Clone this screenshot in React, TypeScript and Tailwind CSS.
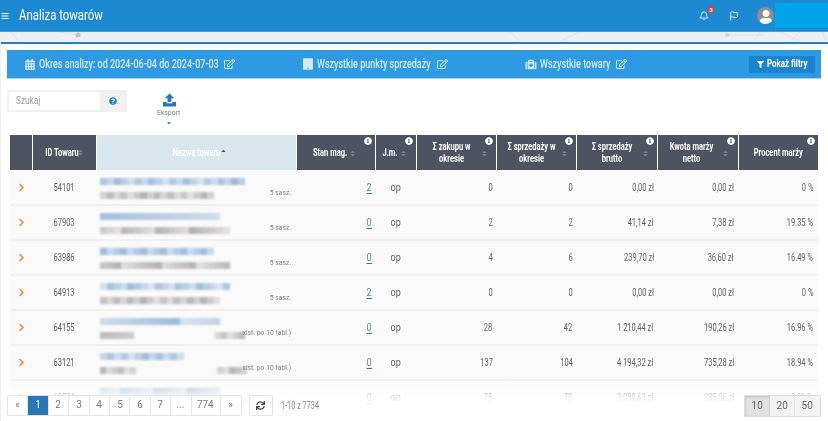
import { Bell, Flag } from "lucide-react";
import {
  FaBars,
  FaCalendarAlt,
  FaChevronRight,
  FaRegEdit,
  FaFilter,
  FaInfoCircle,
  FaMedkit,
  FaQuestionCircle,
  FaSort,
  FaSortUp,
  FaSync,
  FaTablet,
  FaUser,
  FaCaretDown,
} from "react-icons/fa";

type Row = {
  id: string;
  stock: string;
  buy: string;
  sell: string;
  gross: string;
  margin: string;
  pct: string;
  unit: string;
  top: number;
  bottom: number;
  gap?: boolean;
};

const rows: Row[] = [
  { id: "54101", stock: "2", buy: "0", sell: "0", gross: "0,00 zł", margin: "0,00 zł", pct: "0 %", unit: "5 sasz.", top: 145, bottom: 114 },
  { id: "67903", stock: "0", buy: "2", sell: "2", gross: "41,14 zł", margin: "7,38 zł", pct: "19.35 %", unit: "5 sasz.", top: 120, bottom: 130 },
  { id: "63986", stock: "0", buy: "4", sell: "6", gross: "239,70 zł", margin: "36,60 zł", pct: "16.49 %", unit: "5 sasz.", top: 114, bottom: 130 },
  { id: "64913", stock: "2", buy: "0", sell: "0", gross: "0,00 zł", margin: "0,00 zł", pct: "0 %", unit: "5 sasz.", top: 130, bottom: 120 },
  { id: "64155", stock: "0", buy: "28", sell: "42", gross: "1 210,44 zł", margin: "190,26 zł", pct: "16.96 %", unit: "xist. po 10 tabl.)", top: 120, bottom: 34, gap: true },
  { id: "63121", stock: "0", buy: "137", sell: "104", gross: "4 194,32 zł", margin: "735,28 zł", pct: "18.94 %", unit: "xist. po 10 tabl.)", top: 84, bottom: 36, gap: true },
  { id: "65574", stock: "0", buy: "75", sell: "73", gross: "3 088,63 zł", margin: "235,06 zł", pct: "8,01 %", unit: "xist. po 10 tabl.)", top: 120, bottom: 34, gap: true },
];

const headers = [
  { lines: ["Stan mag."], w: "w-[79px]", pad: "pr-[12px]", sort: "right-[20px]" },
  { lines: ["J.m."], w: "w-[41px]", pad: "pr-[12px]", sort: "right-[10px]" },
  { lines: ["Σ zakupu w", "okresie"], w: "w-[80px]", pad: "pr-[10px]", sort: "right-[9px]" },
  { lines: ["Σ sprzedaży w", "okresie"], w: "w-[80px]", pad: "pr-[10px]", sort: "right-[9px]" },
  { lines: ["Σ sprzedaży", "brutto"], w: "w-[81px]", pad: "pr-[10px]", sort: "right-[9px]" },
  { lines: ["Kwota marży", "netto"], w: "w-[81px]", pad: "pr-[13px]", sort: "right-[10px]" },
  { lines: ["Procent marży"], w: "w-[79px]", pad: "", sort: "" },
];

// paski udające rozmazaną nazwę towaru
function Smear({ width, blue, seed }: { width: number; blue: boolean; seed: number }) {
  const cells = Array.from({ length: Math.ceil(width / 7) }, (_, i) => {
    const v = ((i + 3) * (seed + 7) * 37) % 100;
    const a = 0.25 + (v / 100) * 0.45;
    return blue ? `rgba(118,160,205,${a})` : `rgba(150,145,145,${a})`;
  });
  return (
    <div className="flex h-[7px] blur-[1px]" style={{ width }}>
      {cells.map((c, i) => (
        <div key={i} className="h-full flex-1" style={{ background: c }} />
      ))}
    </div>
  );
}

function Pager({ children, active, w = "w-[20.4px]" }: { children: React.ReactNode; active?: boolean; w?: string }) {
  return (
    <div
      className={`flex h-full items-center justify-center border-r border-[#e3e3e3] text-[11px] last:border-r-0 ${w} ${
        active ? "bg-[#2a76b4] text-white" : "text-[#777]"
      }`}
    >
      <span className="scale-x-90">{children}</span>
    </div>
  );
}

function Val({ children }: { children: React.ReactNode }) {
  return <span className="inline-block origin-right scale-x-75 whitespace-nowrap">{children}</span>;
}

export default function App() {
  return (
    <div className="relative flex h-[421px] w-[828px] flex-col overflow-hidden bg-[#ecf0f3] font-['Roboto',sans-serif]">
      <header className="flex h-[32px] shrink-0 items-center border-b border-[#3b9fe0] bg-[#1c89d2] pl-[1px] text-white">
        <FaBars className="h-[8px] w-[8px]" />
        <span className="ml-[10px] origin-left scale-x-[0.76] whitespace-nowrap text-[15px]">Analiza towarów</span>
        <div className="ml-auto flex h-full items-center">
          <div className="relative mr-[20px]">
            <Bell className="h-[10px] w-[10px]" strokeWidth={2} />
            <span className="absolute -right-[5px] -top-[5px] flex h-[7px] w-[6px] items-center justify-center rounded-[1px] bg-[#d9413a] text-[6px] font-bold">3</span>
          </div>
          <Flag className="mr-[18px] h-[10px] w-[10px]" strokeWidth={2} />
          <div className="flex h-[17px] w-[17px] items-end justify-center overflow-hidden rounded-full bg-[#8a8f94]">
            <FaUser className="h-[14px] w-[14px] text-white" />
          </div>
          <div className="ml-[1px] h-[25px] w-[53px] bg-[#02a3e8]" />
        </div>
      </header>

      <div className="h-[9px] shrink-0 overflow-hidden">
        <svg viewBox="0 0 828 9" className="h-full w-full">
          <g stroke="#d5dadd" strokeWidth="0.6" fill="none">
            <path d="M12 0 L18 9 M60 0 L78 3 L74 9 M510 0 L520 9 M560 9 L580 0 M726 3 L764 3 M755 9 L760 0 M780 0 L800 9 M800 0 L790 9 M822 0 L826 9" />
          </g>
          <circle cx="78" cy="3" r="2.5" fill="#bfc4c8" />
          <circle cx="727" cy="3" r="2" fill="#d0d5d8" />
        </svg>
      </div>

      <main className="ml-[1px] flex min-h-0 flex-1 flex-col bg-white pt-[1px]">
        <div className="h-[2px] shrink-0 bg-[#1c7fd0]" />
        <div className="ml-[6px] mr-[7px] mt-[6px] flex h-[29px] shrink-0 items-center border-b border-[#a8d4f2] bg-[#2d9ae3] text-[12px] font-medium text-[#d4e9f8]">
          <FaCalendarAlt className="ml-[18px] h-[11px] w-[10px]" />
          <span className="ml-[4px] w-[185px] origin-left scale-x-75 whitespace-nowrap">Okres analizy: od 2024-06-04 do 2024-07-03</span>
          <FaRegEdit className="h-[10px] w-[11px]" />
          <FaTablet className="ml-[68px] h-[12px] w-[10px]" />
          <span className="ml-[4px] w-[120px] origin-left scale-x-75 whitespace-nowrap">Wszystkie punkty sprzedaży</span>
          <FaRegEdit className="h-[10px] w-[11px]" />
          <FaMedkit className="ml-[77px] h-[11px] w-[12px]" />
          <span className="ml-[3px] w-[76px] origin-left scale-x-75 whitespace-nowrap">Wszystkie towary</span>
          <FaRegEdit className="h-[10px] w-[11px]" />
          <button className="ml-auto mr-[6px] flex h-[17px] w-[66px] items-center bg-[#1c84cf] pl-[8px] text-[11px] font-bold text-white">
            <FaFilter className="mr-[3px] h-[7px] w-[7px] shrink-0" />
            <span className="w-[40px] origin-left scale-x-[0.72] whitespace-nowrap">Pokaż filtry</span>
          </button>
        </div>

        <div className="ml-[6px] mt-[11px] flex shrink-0 items-start">
          <div className="flex h-[22px] w-[120px] border-2 border-[#f1f1f1]">
            <div className="flex flex-1 items-center pl-[7px] text-[11px] text-[#9a9a9a]">
              <span className="origin-left scale-x-75">Szukaj</span>
            </div>
            <div className="flex w-[25px] items-center justify-center bg-[#f1f1f1]">
              <FaQuestionCircle className="h-[8px] w-[8px] text-[#1c84d0]" />
            </div>
          </div>
          <div className="ml-[27px] mt-[3px] flex w-[30px] flex-col items-center text-[#2a76b4]">
            <svg viewBox="0 0 16 14" className="h-[14px] w-[15px]" fill="currentColor">
              <path d="M8 0 L13 5 H10 V9 H6 V5 H3 Z" />
              <path d="M1 9 H5 V10.5 H11 V9 H15 V14 H1 Z" />
            </svg>
            <span className="scale-x-[0.85] text-[8px] leading-[12px] text-[#6d7f90]">Eksport</span>
            <FaCaretDown className="mt-[1px] h-[6px] w-[6px] text-[#4a6f92]" />
          </div>
        </div>

        <div className="ml-[9px] mt-[9px] w-[808px] shrink-0">
          <table className="w-full table-fixed border-collapse text-[#5f5f5f]">
            <thead>
              <tr className="h-[35px] text-[10px] font-bold leading-[12px] text-white">
                <th className="w-[22px] border-r border-white bg-[#4d5361]" />
                <th className="relative w-[64px] border-r border-white bg-[#4d5361]">
                  <div className="scale-x-75 whitespace-nowrap pr-[7px]">ID Towaru</div>
                  <FaSort className="absolute right-[13px] top-[14px] h-[7px] w-[5px] text-[#7c818c]" />
                </th>
                <th className="relative w-[200px] border-r border-white bg-[#dbe7ef]">
                  <div className="scale-x-75 whitespace-nowrap">Nazwa towaru</div>
                  <FaSortUp className="absolute right-[70px] top-[14px] h-[7px] w-[5px] text-[#4d5361]" />
                </th>
                {headers.map((h) => (
                  <th key={h.lines[0]} className={`relative border-r border-white bg-[#4d5361] last:border-r-0 ${h.w}`}>
                    <div className={h.pad}>
                      {h.lines.map((l) => (
                        <div key={l} className="scale-x-75 whitespace-nowrap">{l}</div>
                      ))}
                    </div>
                    {h.sort && <FaSort className={`absolute top-[15px] h-[7px] w-[5px] text-[#7c818c] ${h.sort}`} />}
                    <FaInfoCircle className="absolute right-[3px] top-[2px] h-[8px] w-[8px] text-white" />
                  </th>
                ))}
              </tr>
            </thead>
            <tbody className="text-[10px]">
              {rows.map((r, i) => (
                <tr key={r.id} className="h-[35px] border-b-2 border-[#f1f1f1] bg-[#fafafa]">
                  <td className="pl-[8px]">
                    <FaChevronRight className="h-[9px] w-[7px] text-[#f5822a]" />
                  </td>
                  <td className="text-center">
                    <span className="inline-block scale-x-75">{r.id}</span>
                  </td>
                  <td className="px-[4px]">
                    <div className="relative h-[33px]">
                      <div className="absolute left-0 top-[7px]">
                        <Smear width={r.top} blue seed={i} />
                      </div>
                      <div className="absolute left-0 top-[21px] flex gap-[81px]">
                        <Smear width={r.bottom} blue={false} seed={i + 5} />
                        {r.gap && <Smear width={30} blue={false} seed={i + 9} />}
                      </div>
                      <span className="absolute bottom-[5px] right-[1px] origin-right scale-x-[0.85] whitespace-nowrap text-[8px] text-[#808080]">{r.unit}</span>
                    </div>
                  </td>
                  <td className="pr-[4px] text-right">
                    <span className="inline-block origin-right scale-x-90 border-b border-[#2a76b4] leading-[11px] text-[#4a8ecb]">{r.stock}</span>
                  </td>
                  <td className="text-center">
                    <span className="inline-block scale-x-90">op</span>
                  </td>
                  <td className="pr-[4px] text-right"><Val>{r.buy}</Val></td>
                  <td className="pr-[4px] text-right"><Val>{r.sell}</Val></td>
                  <td className="pr-[4px] text-right"><Val>{r.gross}</Val></td>
                  <td className="pr-[5px] text-right"><Val>{r.margin}</Val></td>
                  <td className="pr-[5px] text-right"><Val>{r.pct}</Val></td>
                </tr>
              ))}
            </tbody>
          </table>
        </div>
      </main>

      <div className="absolute bottom-0 left-[1px] right-0 flex h-[43px] items-end justify-between bg-gradient-to-b from-white/0 via-white/90 via-[50%] to-white pb-[4px] pl-[6px] pr-[7px]">
        <div className="mb-[1px] flex h-[21px] items-center">
          <div className="flex h-full items-center overflow-hidden rounded-[2px] border border-[#e3e3e3] bg-white">
            <Pager>«</Pager>
            <Pager active>1</Pager>
            <Pager>2</Pager>
            <Pager>3</Pager>
            <Pager>4</Pager>
            <Pager>5</Pager>
            <Pager>6</Pager>
            <Pager>7</Pager>
            <Pager>...</Pager>
            <Pager w="w-[29px]">774</Pager>
            <Pager>»</Pager>
          </div>
          <div className="ml-[7px] flex h-full w-[24px] items-center justify-center rounded-[2px] border border-[#e3e3e3] bg-white">
            <FaSync className="h-[9px] w-[9px] text-[#444]" />
          </div>
          <span className="ml-[8px] origin-left scale-x-[0.73] whitespace-nowrap text-[10px] text-[#888]">1-10 z 7734</span>
        </div>
        <div className="flex h-[22px] border border-[#dcdcdc] bg-[#f3f3f3] text-[11px] text-[#666]">
          <div className="flex w-[25px] items-center justify-center bg-[#e2e2e2] shadow-[inset_0_1px_3px_rgba(0,0,0,0.15)]"><span className="scale-x-90">10</span></div>
          <div className="flex w-[25px] items-center justify-center border-r border-[#e3e3e3]"><span className="scale-x-90">20</span></div>
          <div className="flex w-[25px] items-center justify-center"><span className="scale-x-90">50</span></div>
        </div>
      </div>
    </div>
  );
}
